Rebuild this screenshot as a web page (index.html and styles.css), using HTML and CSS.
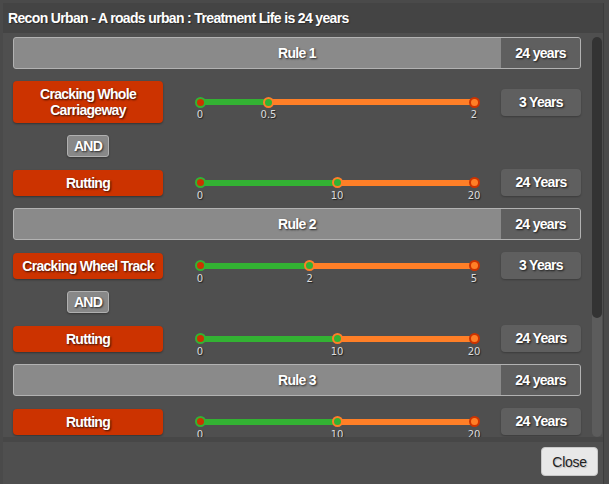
FILE: index.html
```html
<!DOCTYPE html>
<html lang="en">
<head>
    <meta charset="UTF-8">
    <meta name="viewport" content="width=device-width, initial-scale=1.0">
    <title>Treatment Rules</title>
    <link rel="stylesheet" href="styles.css">
</head>
<body>
    <div class="dialog">
        <div class="dialog-title">Recon Urban - A roads urban : Treatment Life is 24 years</div>

        <div class="dialog-main">
            <div class="dialog-body">
                <div class="rule">
                    <div class="rule-name">Rule 1</div>
                    <div class="rule-life">24 years</div>
                </div>
                <div class="condition">
                    <div class="defect">Cracking Whole Carriageway</div>
                    <div class="slider">
                        <div class="track">
                            <div class="fill" style="width: 25%"></div>
                            <span class="knob knob-min" style="left: 0%"></span>
                            <span class="knob knob-mid" style="left: 25%"></span>
                            <span class="knob knob-max" style="left: 100%"></span>
                            <span class="tick" style="left: 0%">0</span>
                            <span class="tick" style="left: 25%">0.5</span>
                            <span class="tick" style="left: 100%">2</span>
                        </div>
                    </div>
                    <div class="life">3 Years</div>
                </div>
                <div class="and-row"><span class="and">AND</span></div>
                <div class="condition">
                    <div class="defect">Rutting</div>
                    <div class="slider">
                        <div class="track">
                            <div class="fill" style="width: 50%"></div>
                            <span class="knob knob-min" style="left: 0%"></span>
                            <span class="knob knob-mid" style="left: 50%"></span>
                            <span class="knob knob-max" style="left: 100%"></span>
                            <span class="tick" style="left: 0%">0</span>
                            <span class="tick" style="left: 50%">10</span>
                            <span class="tick" style="left: 100%">20</span>
                        </div>
                    </div>
                    <div class="life">24 Years</div>
                </div>

                <div class="rule">
                    <div class="rule-name">Rule 2</div>
                    <div class="rule-life">24 years</div>
                </div>
                <div class="condition">
                    <div class="defect">Cracking Wheel Track</div>
                    <div class="slider">
                        <div class="track">
                            <div class="fill" style="width: 40%"></div>
                            <span class="knob knob-min" style="left: 0%"></span>
                            <span class="knob knob-mid" style="left: 40%"></span>
                            <span class="knob knob-max" style="left: 100%"></span>
                            <span class="tick" style="left: 0%">0</span>
                            <span class="tick" style="left: 40%">2</span>
                            <span class="tick" style="left: 100%">5</span>
                        </div>
                    </div>
                    <div class="life">3 Years</div>
                </div>
                <div class="and-row"><span class="and">AND</span></div>
                <div class="condition">
                    <div class="defect">Rutting</div>
                    <div class="slider">
                        <div class="track">
                            <div class="fill" style="width: 50%"></div>
                            <span class="knob knob-min" style="left: 0%"></span>
                            <span class="knob knob-mid" style="left: 50%"></span>
                            <span class="knob knob-max" style="left: 100%"></span>
                            <span class="tick" style="left: 0%">0</span>
                            <span class="tick" style="left: 50%">10</span>
                            <span class="tick" style="left: 100%">20</span>
                        </div>
                    </div>
                    <div class="life">24 Years</div>
                </div>

                <div class="rule">
                    <div class="rule-name">Rule 3</div>
                    <div class="rule-life">24 years</div>
                </div>
                <div class="condition">
                    <div class="defect">Rutting</div>
                    <div class="slider">
                        <div class="track">
                            <div class="fill" style="width: 50%"></div>
                            <span class="knob knob-min" style="left: 0%"></span>
                            <span class="knob knob-mid" style="left: 50%"></span>
                            <span class="knob knob-max" style="left: 100%"></span>
                            <span class="tick" style="left: 0%">0</span>
                            <span class="tick" style="left: 50%">10</span>
                            <span class="tick" style="left: 100%">20</span>
                        </div>
                    </div>
                    <div class="life">24 Years</div>
                </div>
            </div>
            <div class="scrollbar"><div class="scroll-thumb"></div></div>
        </div>

        <div class="dialog-footer">
            <button class="close-btn">Close</button>
        </div>
    </div>
</body>
</html>
```

FILE: styles.css
```css
* {
    margin: 0;
    padding: 0;
    box-sizing: border-box;
    font-family: "Liberation Sans", Arial, sans-serif;
}

body {
    width: 100%;
    height: 100vh;
    background: #4a4a4a;
    overflow: hidden;
}

.dialog {
    margin: 3px 5px 0 3px;
    height: 481px;
    display: flex;
    flex-direction: column;
    background: #4f4f4f;
    border-right: 1px solid #3c3c3c;
}

.dialog-title {
    flex-shrink: 0;
    height: 30px;
    line-height: 30px;
    padding-left: 5px;
    background: #444444;
    color: #ffffff;
    font-size: 14px;
    font-weight: 700;
    letter-spacing: -0.65px;
    text-shadow: 1px 1px 1px rgba(0, 0, 0, 0.4);
}

.dialog-main {
    flex-shrink: 0;
    height: 404px;
    display: flex;
}

.dialog-body {
    flex: 1;
    min-width: 0;
    overflow: hidden;
    padding: 4px 11px 0 10px;
    display: flex;
    flex-direction: column;
    gap: 12px;
}

/* drawn scrollbar, list is scrolled to the top */
.scrollbar {
    width: 10px;
    margin: 4px 1px 0 0;
    border-radius: 5px;
    background: #5c5c5c;
}

.scroll-thumb {
    height: 281px;
    border-radius: 5px;
    background: #333333;
}

/* shared white bold label look */
.rule, .defect, .life, .and {
    color: #ffffff;
    font-size: 14px;
    font-weight: 700;
    letter-spacing: -0.7px;
    text-shadow: 1px 1px 2px rgba(0, 0, 0, 0.75);
    text-align: center;
}

.rule {
    flex-shrink: 0;
    display: flex;
    height: 32px;
    border: 1px solid #b2b2b2;
    border-radius: 3px;
    background: #8a8a8a;
    overflow: hidden;
}

.rule-name {
    flex: 1;
    line-height: 30px;
    padding-left: 79px;
}

.rule-life {
    width: 79px;
    line-height: 30px;
    background: #5f5f5f;
}

.condition {
    flex-shrink: 0;
    display: grid;
    grid-template-columns: 150px 1fr 80px;
    align-items: center;
}

.defect {
    padding: 5px 8px;
    line-height: 16px;
    background: #cc3300;
    border-radius: 4px;
    box-shadow: 0 1px 2px rgba(0, 0, 0, 0.35);
}

.life {
    height: 27px;
    line-height: 27px;
    background: #5f5f5f;
    border-radius: 4px;
    box-shadow: 0 1px 2px rgba(0, 0, 0, 0.25);
}

.slider {
    padding: 0 27px 0 37px;
}

.track {
    position: relative;
    height: 6px;
    border-radius: 3px;
    background: #ff7f27;
}

.fill {
    height: 100%;
    border-radius: 3px 0 0 3px;
    background: #33b233;
}

.knob {
    position: absolute;
    top: 50%;
    width: 11px;
    height: 11px;
    margin: -5.5px 0 0 -5.5px;
    border-radius: 50%;
    border: 2px solid;
}

.knob-min {
    border-color: #33b233;
    background: #cc3300;
}

.knob-mid {
    border-color: #ff7f27;
    background: #33b233;
}

.knob-max {
    border-color: #cc3300;
    background: #ff7f27;
}

.tick {
    position: absolute;
    top: 10px;
    transform: translateX(-50%);
    color: #dddddd;
    font-family: "DejaVu Sans", sans-serif;
    font-size: 10px;
    line-height: 12px;
    text-shadow: 1px 1px 1px rgba(0, 0, 0, 0.6);
}

.and-row {
    flex-shrink: 0;
    width: 150px;
    text-align: center;
}

.and {
    display: inline-block;
    height: 22px;
    line-height: 20px;
    padding: 0 6px;
    background: #888888;
    border: 1px solid #b0b0b0;
    border-radius: 3px;
    box-shadow: 0 1px 2px rgba(0, 0, 0, 0.3);
    vertical-align: top;
}

.dialog-footer {
    flex: 1;
    margin-top: 5px;
    padding: 5px 5px 0 0;
    display: flex;
    justify-content: flex-end;
    align-items: flex-start;
    box-shadow: 0 -5px 0 #474747;
}

.close-btn {
    width: 57px;
    height: 29px;
    border: 1px solid #c8c8c8;
    border-radius: 4px;
    background: #e8e8e8;
    color: #222222;
    font-size: 14px;
    letter-spacing: -0.3px;
    text-shadow: 1px 1px 1px rgba(0, 0, 0, 0.2);
    cursor: pointer;
}
```
